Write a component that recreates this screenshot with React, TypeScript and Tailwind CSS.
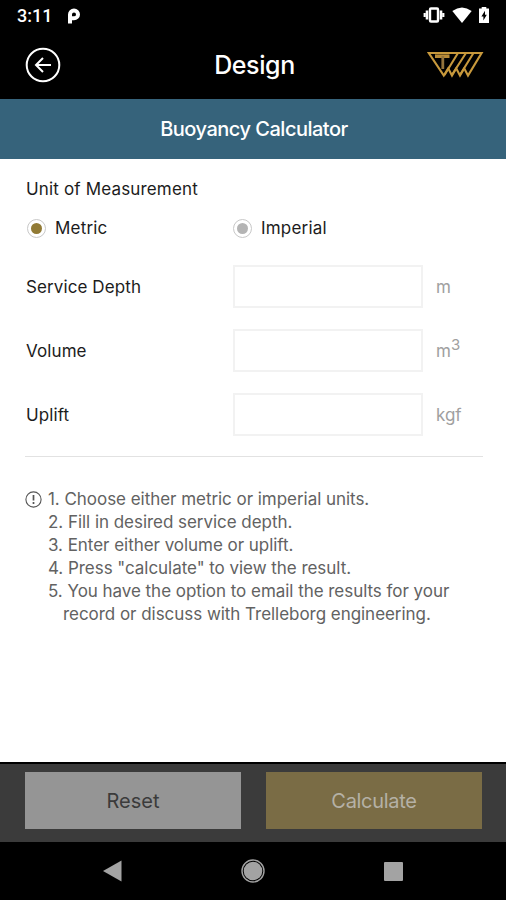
import { useState } from 'react'

type Unit = 'metric' | 'imperial'

const StatusBar = () => (
  <div className="flex h-[30px] items-center justify-between bg-black pl-[17px] pr-[16px] text-white">
    <div className="flex items-center pt-[2px]">
      <span className="w-[50px] font-[Roboto,sans-serif] text-[18px] font-medium leading-[22px]">3:11</span>
      <svg width="14" height="16" viewBox="0 0 14 16" fill="none">
        <path d="M3 15.5V6.4a4 3.9 0 1 1 4 3.9H1.5" stroke="currentColor" strokeWidth="4" />
      </svg>
    </div>
    <div className="flex items-center">
      <svg width="22" height="18" viewBox="0 0 22 18" fill="none" stroke="currentColor">
        <rect x="7" y="2.5" width="8" height="13" rx="1" strokeWidth="2.4" />
        <path d="M4 4.5v9M18 4.5v9" strokeWidth="2.6" />
        <path d="M1.7 7v4M20.3 7v4" strokeWidth="2.2" />
      </svg>
      <svg className="ml-[7px]" width="20" height="16" viewBox="0 0 20 16" fill="currentColor">
        <path d="M.3 4Q10-3.2 19.7 4L10 16Z" />
      </svg>
      <svg className="ml-[6px]" width="12" height="18" viewBox="0 0 12 18">
        <path d="M3.7 1h4.6v1.6H11V17H1V2.6h2.7Z" fill="currentColor" />
        <path d="M7 4.8 3.4 10.4h2v4L8.8 8.8H7Z" fill="#000" />
      </svg>
    </div>
  </div>
)

const Header = () => (
  <header className="grid h-[69px] grid-cols-[1fr_auto_1fr] items-center bg-black pl-[25px] pr-[22px] text-white">
    <button type="button" aria-label="Back" className="w-[36px]">
      <svg width="36" height="36" viewBox="0 0 36 36" fill="none" stroke="currentColor" strokeWidth="2">
        <circle cx="18" cy="18" r="16.3" />
        <path d="M26 18H11.5M18 11l-7 7 7 7" />
      </svg>
    </button>
    <h1 className="text-[25px] font-medium leading-[30px] tracking-[-0.4px]">Design</h1>
    <svg className="justify-self-end" width="57" height="28" viewBox="0 0 57 28" fill="none" stroke="#c8993c" strokeWidth="2.1">
      <path d="M1.8 2H54.6L41 24.5 37.2 17.3 33 24.5 29.2 17.3 25 24.5 21.2 17.3 16.8 24.5Z" />
      <path d="M17.5 24 31 2M25.5 23 39 2M33.5 23 46.5 2" />
      <path d="M8 5.2h14.5" stroke="#b98b37" strokeWidth="3.6" />
      <path d="M15.8 5v13" stroke="#94743c" strokeWidth="2.8" />
    </svg>
  </header>
)

const UnitOption = ({ label, checked, onSelect }: { label: string; checked: boolean; onSelect: () => void }) => (
  <button type="button" role="radio" aria-checked={checked} onClick={onSelect} className="flex items-center pl-[2px]">
    <span className="flex size-[19px] items-center justify-center rounded-full border border-[#c8c8c8]">
      <span className={`size-[11px] rounded-full ${checked ? 'bg-[#917a35]' : 'bg-[#b4b4b4]'}`} />
    </span>
    <span className="ml-[9px] tracking-[0.2px]">{label}</span>
  </button>
)

const fields = [
  { key: 'depth', label: 'Service Depth', metric: 'm', imperial: 'ft', sup: '' },
  { key: 'volume', label: 'Volume', metric: 'm', imperial: 'ft', sup: '3' },
  { key: 'uplift', label: 'Uplift', metric: 'kgf', imperial: 'lbf', sup: '' },
]

const steps = [
  ['1. Choose either metric or imperial units.'],
  ['2. Fill in desired service depth.'],
  ['3. Enter either volume or uplift.'],
  ['4. Press "calculate" to view the result.'],
  ['5. You have the option to email the results for your', 'record or discuss with Trelleborg engineering.'],
]

export default function App() {
  const [unit, setUnit] = useState<Unit>('metric')
  const [values, setValues] = useState<Record<string, string>>({})

  return (
    <div className="flex h-[900px] w-[506px] flex-col overflow-hidden bg-white font-[Inter,sans-serif] text-[17px] leading-[23px] text-[#1c1c1c]">
      <StatusBar />
      <Header />
      <h2 className="flex h-[60px] items-center justify-center bg-[#36637b] pl-[2px] text-[20px] font-medium tracking-[-0.5px] text-white">
        Buoyancy Calculator
      </h2>

      <main className="flex-1 pl-[25px] pr-[23px] pt-[19px]">
        <p className="pl-px tracking-[0.16px]">Unit of Measurement</p>
        <div role="radiogroup" className="mt-[16px] grid grid-cols-[206px_1fr]">
          <UnitOption label="Metric" checked={unit === 'metric'} onSelect={() => setUnit('metric')} />
          <UnitOption label="Imperial" checked={unit === 'imperial'} onSelect={() => setUnit('imperial')} />
        </div>

        <div className="mt-[25px] space-y-[21px]">
          {fields.map((field) => (
            <label key={field.key} className="grid h-[43px] grid-cols-[208px_190px_1fr] items-center">
              <span className="pl-px pt-px tracking-[0.1px]">{field.label}</span>
              <input
                className="h-[43px] w-full border-2 border-[#f2f2f2] px-3 outline-none"
                value={values[field.key] ?? ''}
                onChange={(e) => setValues({ ...values, [field.key]: e.target.value })}
              />
              <span className="pl-[13px] pt-px text-[#a0a0a0]">
                {field[unit]}
                {field.sup && <sup className="top-[-7px] text-[15px]">{field.sup}</sup>}
              </span>
            </label>
          ))}
        </div>

        {/* Instructions */}
        <div className="mt-5 flex border-t border-[#e2e2e2] pt-[31px] text-[#626262]">
          <svg className="mt-[3px] shrink-0" width="17" height="17" viewBox="0 0 17 17" fill="none" stroke="#555">
            <circle cx="8.5" cy="8.5" r="7.6" strokeWidth="1.1" />
            <path d="M8.5 4v5.6M8.5 11v2" strokeWidth="1.7" />
          </svg>
          <ol className="ml-[6px] whitespace-nowrap tracking-[-0.04px]">
            {steps.map(([first, rest]) => (
              <li key={first}>
                {first}
                {rest && <span className="block pl-[15px]">{rest}</span>}
              </li>
            ))}
          </ol>
        </div>
      </main>

      <footer className="grid h-[80px] grid-cols-2 gap-[25px] border-t-2 border-black bg-[#3b3b3b] pb-[13px] pl-[25px] pr-[24px] pt-[8px] text-[20px]">
        <button type="button" className="bg-[#959595] pt-px text-[#3b3b3b]">Reset</button>
        <button type="button" className="bg-[#7a6c45] pt-px tracking-[-0.3px] text-[#b5b1a6]">Calculate</button>
      </footer>

      <nav className="flex h-[58px] items-center justify-between bg-black px-[103px] text-[#a3a3a3]">
        <svg width="19" height="22" viewBox="0 0 19 22" fill="currentColor">
          <path d="M18.5.5v21L0 11Z" />
        </svg>
        <svg width="24" height="24" viewBox="0 0 24 24" fill="currentColor">
          <circle cx="12" cy="12" r="9.3" />
          <circle cx="12" cy="12" r="11" fill="none" stroke="currentColor" strokeWidth="1.4" />
        </svg>
        <span className="size-[19px] rounded-[1px] bg-[#a3a3a3]" />
      </nav>
    </div>
  )
}
